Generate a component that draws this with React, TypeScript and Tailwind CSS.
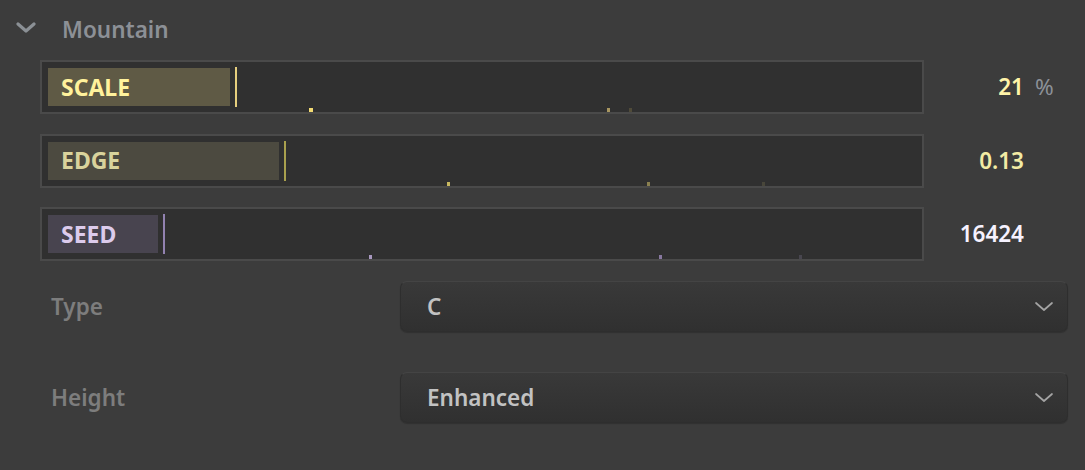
import React from "react";

type Slider = {
  label: string;
  value: string;
  unit?: string;
  fill: number;
  fillBg: string;
  labelColor: string;
  cursor: string;
  valueColor: string;
  dots: { x: number; w: number; color: string }[];
};

const sliders: Slider[] = [
  {
    label: "SCALE",
    value: "21",
    unit: "%",
    fill: 182,
    fillBg: "bg-[#5f5a45]",
    labelColor: "text-[#fff29c]",
    cursor: "bg-[#e6cf7e]",
    valueColor: "text-[#fff4a8]",
    dots: [
      { x: 267, w: 4, color: "#f2da72" },
      { x: 565, w: 3, color: "#a89660" },
      { x: 587, w: 3, color: "#504b39" },
    ],
  },
  {
    label: "EDGE",
    value: "0.13",
    fill: 231,
    fillBg: "bg-[#4c4a40]",
    labelColor: "text-[#d9d39c]",
    cursor: "bg-[#a9a04e]",
    valueColor: "text-[#f2eba4]",
    dots: [
      { x: 405, w: 3, color: "#c8b860" },
      { x: 605, w: 3, color: "#8a8050" },
      { x: 720, w: 3, color: "#48463a" },
    ],
  },
  {
    label: "SEED",
    value: "16424",
    fill: 110,
    fillBg: "bg-[#48444f]",
    labelColor: "text-[#dccbec]",
    cursor: "bg-[#9282b0]",
    valueColor: "text-[#f6f2ff]",
    dots: [
      { x: 327, w: 3, color: "#a898c0" },
      { x: 617, w: 3, color: "#8878a0" },
      { x: 757, w: 3, color: "#48464f" },
    ],
  },
];

const ChevronDown: React.FC<{ className?: string; strokeWidth?: number }> = ({
  className,
  strokeWidth = 2,
}) => (
  <svg viewBox="0 0 20 11" className={className} fill="none">
    <path
      d="M2 2 L10 9 L18 2"
      stroke="currentColor"
      strokeWidth={strokeWidth}
      strokeLinecap="round"
      strokeLinejoin="round"
    />
  </svg>
);

const SliderRow: React.FC<{ s: Slider }> = ({ s }) => (
  <div className="flex items-center h-[54px]">
    <div className="relative w-[884px] h-[54px] border-2 border-[#4a4a4a] bg-[#303030] p-[6px] flex items-center">
      <div
        className={`h-[38px] ${s.fillBg} flex items-center pl-[13px] shrink-0`}
        style={{ width: s.fill }}
      >
        <span className={`text-[23px] font-bold leading-none ${s.labelColor}`}>{s.label}</span>
      </div>
      <div className={`ml-[5px] w-[2px] h-[40px] ${s.cursor}`} />
      {s.dots.map((d, i) => (
        <div
          key={i}
          className="absolute bottom-0 h-[4px]"
          style={{ left: d.x, width: d.w, backgroundColor: d.color }}
        />
      ))}
    </div>
    <div className={`w-[100px] text-right text-[22.5px] font-semibold ${s.valueColor}`}>
      {s.value}
    </div>
    {s.unit && <div className="ml-[11px] text-[22.5px] text-[#8c9198]">{s.unit}</div>}
  </div>
);

const SelectRow: React.FC<{ label: string; value: string }> = ({ label, value }) => (
  <div className="flex items-center">
    <div className="w-[400px] pl-[51px] text-[22.5px] font-semibold text-[#7d7d7d]">{label}</div>
    <div className="w-[668px] h-[51px] rounded-[7px] border border-[#2e2e2e] border-t-[#444] bg-gradient-to-b from-[#393939] to-[#303030] flex items-center justify-between pl-[26px] pr-[13px] shadow-[0_1px_1px_rgba(0,0,0,0.2)]">
      <span className="text-[22.5px] font-semibold text-[#c2c2c2]">{value}</span>
      <ChevronDown className="w-[20px] h-[11px] text-[#a4a4a4]" strokeWidth={1.7} />
    </div>
  </div>
);

export default function App() {
  return (
    <div
      className="w-[1085px] h-[470px] bg-[#3c3c3c] overflow-hidden"
      style={{ fontFamily: '"Noto Sans", "Open Sans", sans-serif' }}
    >
      <div className="h-[60px] flex items-center pl-[16px]">
        <ChevronDown className="w-[20px] h-[11px] -mt-[6px] text-[#8b9095]" strokeWidth={3.2} />
        <span className="ml-[26px] text-[22.5px] font-semibold text-[#8c9096]">Mountain</span>
      </div>
      <div className="pl-[40px] flex flex-col gap-[19.5px]">
        {sliders.map((s) => (
          <SliderRow key={s.label} s={s} />
        ))}
      </div>
      <div className="mt-[20px] flex flex-col gap-[40px]">
        <SelectRow label="Type" value="C" />
        <SelectRow label="Height" value="Enhanced" />
      </div>
    </div>
  );
}
